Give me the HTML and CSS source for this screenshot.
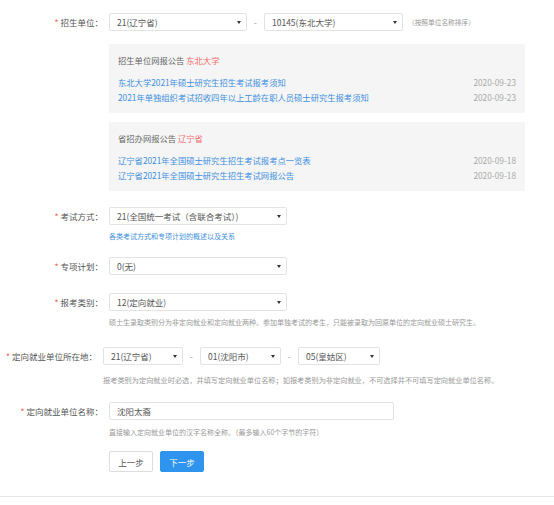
FILE: index.html
```html
<!DOCTYPE html>
<html lang="zh-CN">
<head>
<meta charset="utf-8">
<title>报考信息</title>
<link rel="stylesheet" href="styles.css">
</head>
<body>
<div class="form">
  <div class="row row-unit">
    <div class="label"><span class="req">*</span>招生单位：</div>
    <div class="field">
      <div class="line">
        <div class="select w138"><span>21(辽宁省)</span><span class="caret"></span></div>
        <span class="sep">-</span>
        <div class="select w139"><span>10145(东北大学)</span><span class="caret"></span></div>
        <span class="side-hint">（按照单位名称排序）</span>
      </div>
      <div class="box box-first">
        <div class="box-title">招生单位网报公告 <span class="red">东北大学</span></div>
        <div class="notice"><a class="link">东北大学2021年硕士研究生招生考试报考须知</a><span class="date">2020-09-23</span></div>
        <div class="notice"><a class="link">2021年单独组织考试招收四年以上工龄在职人员硕士研究生报考须知</a><span class="date">2020-09-23</span></div>
      </div>
      <div class="box box-second">
        <div class="box-title">省招办网报公告 <span class="red">辽宁省</span></div>
        <div class="notice"><a class="link">辽宁省2021年全国硕士研究生招生考试报考点一览表</a><span class="date">2020-09-18</span></div>
        <div class="notice"><a class="link">辽宁省2021年全国硕士研究生招生考试网报公告</a><span class="date">2020-09-18</span></div>
      </div>
    </div>
  </div>

  <div class="row row-mode">
    <div class="label"><span class="req">*</span>考试方式：</div>
    <div class="field">
      <div class="select w178"><span>21(全国统一考试（含联合考试）)</span><span class="caret"></span></div>
      <a class="hint hint-link">各类考试方式和专项计划的概述以及关系</a>
    </div>
  </div>

  <div class="row row-plan">
    <div class="label"><span class="req">*</span>专项计划：</div>
    <div class="field">
      <div class="select w178"><span>0(无)</span><span class="caret"></span></div>
    </div>
  </div>

  <div class="row row-type">
    <div class="label"><span class="req">*</span>报考类别：</div>
    <div class="field">
      <div class="select w178"><span>12(定向就业)</span><span class="caret"></span></div>
      <div class="hint">硕士生录取类别分为非定向就业和定向就业两种。参加单独考试的考生，只能被录取为回原单位的定向就业硕士研究生。</div>
    </div>
  </div>

  <div class="row row-place">
    <div class="label label-wide"><span class="req">*</span>定向就业单位所在地：</div>
    <div class="field">
      <div class="line">
        <div class="select w80"><span>21(辽宁省)</span><span class="caret"></span></div>
        <span class="sep">-</span>
        <div class="select w81"><span>01(沈阳市)</span><span class="caret"></span></div>
        <span class="sep">-</span>
        <div class="select w82"><span>05(皇姑区)</span><span class="caret"></span></div>
      </div>
      <div class="hint hint-place">报考类别为定向就业时必选，并填写定向就业单位名称；如报考类别为非定向就业，不可选择并不可填写定向就业单位名称。</div>
    </div>
  </div>

  <div class="row row-name">
    <div class="label"><span class="req">*</span>定向就业单位名称：</div>
    <div class="field">
      <div class="input">沈阳太裔</div>
      <div class="hint hint-name">直接输入定向就业单位的汉字名称全称。（最多输入60个字节的字符）</div>
    </div>
  </div>

  <div class="row row-buttons">
    <div class="label"></div>
    <div class="buttons">
      <button class="btn">上一步</button>
      <button class="btn btn-primary">下一步</button>
    </div>
  </div>
  <div class="divider"></div>
</div>
</body>
</html>
```

FILE: styles.css
```css
html, body {
  margin: 0;
  padding: 0;
  background: #ffffff;
}

body {
  font-family: "Noto Sans CJK SC", "Liberation Sans", sans-serif;
  color: #555555;
  font-size: 8.5px;
}

.form {
  padding-top: 13px;
}

.row {
  display: flex;
  align-items: flex-start;
}

.label {
  width: 109px;
  flex: none;
  box-sizing: border-box;
  padding-right: 6px;
  text-align: right;
  line-height: 18px;
  font-size: 8.5px;
  color: #555555;
  white-space: nowrap;
}

.label-wide {
  width: 103px;
}

.req {
  color: #f25b4b;
  margin-right: 2px;
}

.field {
  display: flex;
  flex-direction: column;
  align-items: flex-start;
}

.line {
  display: flex;
  align-items: center;
}

.select {
  display: flex;
  align-items: center;
  justify-content: space-between;
  height: 18px;
  box-sizing: border-box;
  border: 1px solid #e3e3e3;
  border-radius: 2px;
  padding: 0 5px 0 7px;
  font-size: 8.5px;
  color: #555555;
  background: #ffffff;
  white-space: nowrap;
}

.w80 { width: 80px; }
.w81 { width: 81px; }
.w82 { width: 82px; }
.w138 { width: 138px; }
.w139 { width: 139px; }
.w178 { width: 178px; }

.caret {
  width: 0;
  height: 0;
  border-left: 2px solid transparent;
  border-right: 2px solid transparent;
  border-top: 3px solid #333333;
}

.sep {
  width: 17px;
  text-align: center;
  color: #888888;
  font-size: 8px;
}

.side-hint {
  margin-left: 5px;
  font-size: 6.7px;
  color: #999999;
}

.box {
  width: 416px;
  box-sizing: border-box;
  background: #f5f5f5;
  padding: 9px 9px 8px;
}

.box-first {
  margin-top: 13px;
}

.box-second {
  margin-top: 9px;
}

.box-title {
  line-height: 14px;
  margin-bottom: 8px;
  color: #666666;
  font-size: 8.3px;
}

.red {
  color: #f56c6c;
}

.notice {
  display: flex;
  justify-content: space-between;
  line-height: 15px;
  font-size: 8.3px;
}

.link {
  color: #3d8fe3;
  text-decoration: none;
}

.date {
  color: #aaaaaa;
}

.hint {
  margin-top: 5px;
  line-height: 12px;
  font-size: 7px;
  color: #999999;
  white-space: nowrap;
}

.hint-link {
  color: #3d8fe3;
  text-decoration: none;
}

.hint-place {
  margin-top: 9px;
  font-size: 7.2px;
}

.hint-name {
  margin-top: 6px;
}

.input {
  width: 285px;
  height: 18px;
  box-sizing: border-box;
  border: 1px solid #e3e3e3;
  border-radius: 2px;
  padding: 0 7px;
  line-height: 16px;
  font-size: 8.5px;
  color: #555555;
}

.row-unit { margin-bottom: 16px; }
.row-mode { margin-bottom: 15px; }
.row-plan { margin-bottom: 18px; }
.row-type { margin-bottom: 19px; }
.row-place { margin-bottom: 16px; }
.row-name { margin-bottom: 13px; }
.row-buttons { margin-bottom: 24px; }

.buttons {
  display: flex;
  gap: 7px;
}

.btn {
  width: 44px;
  height: 21px;
  box-sizing: border-box;
  border: 1px solid #dddddd;
  border-radius: 2px;
  background: #ffffff;
  color: #555555;
  font-family: "Noto Sans CJK SC", "Liberation Sans", sans-serif;
  font-size: 8.5px;
  padding: 0;
}

.btn-primary {
  background: #2e94ee;
  border-color: #2e94ee;
  color: #ffffff;
}

.divider {
  border-top: 1px solid #e8e8e8;
}
```
